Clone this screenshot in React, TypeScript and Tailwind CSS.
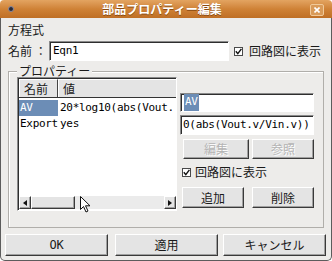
import React from "react";

const JP = "font-['Noto_Sans_CJK_JP',sans-serif]";
const MONO = "font-['DejaVu_Sans_Mono','Noto_Sans_CJK_JP',monospace] tracking-[-0.3px]";

const raised =
  "border border-t-white border-l-white border-r-[#3a3a3a] border-b-[#3a3a3a] shadow-[inset_-1px_-1px_0_#a0a0a0] bg-[#e4e4e4]";
const sunken =
  "border border-t-[#8a8a8a] border-l-[#8a8a8a] border-r-white border-b-white shadow-[inset_1px_1px_0_#2e2e2e]";

function Button({ label, w, disabled, mono }: { label: string; w: string; disabled?: boolean; mono?: boolean }) {
  return (
    <div className={`${w} h-full flex items-center justify-center text-[12px] ${raised} ${mono ? MONO : JP} ${
      disabled ? "text-[#b4b4b4] [text-shadow:1px_1px_0_#fff]" : "text-[#1a1a1a]"
    }`}>
      {label}
    </div>
  );
}

function Check() {
  return (
    <div className="w-[9px] h-[9px] border border-[#4a4a4a] bg-white flex items-center justify-center">
      <svg width="7" height="7" viewBox="0 0 7 7">
        <path d="M0.8 3.2 L2.8 5.6 L6.4 0.8" stroke="#111" strokeWidth="1.4" fill="none" />
      </svg>
    </div>
  );
}

export default function App() {
  return (
    <div className="w-[332px] h-[261px] flex flex-col bg-white">
      {/* title bar */}
      <div className="h-[18px] flex items-center rounded-t-[4px] bg-gradient-to-b from-[#e3a461] via-[#cf8236] to-[#bf6f25] px-[8px]">
        <div className="w-[6px] h-[6px] rounded-full bg-[#2a2a35] border border-[#8a8aa0]" />
        <div className={`flex-1 text-center text-white font-bold text-[12px] leading-none ${JP} [text-shadow:0_1px_0_#8a4a10]`}>
          部品プロパティー編集
        </div>
        <div className="w-[14px] h-[12px] mt-[1px] rounded-[2px] border border-[#f0c999] bg-[#d99a58] flex items-center justify-center">
          <svg width="6" height="6" viewBox="0 0 6 6">
            <path d="M0.5 0.5 L5.5 5.5 M5.5 0.5 L0.5 5.5" stroke="#fff" strokeWidth="1.6" />
          </svg>
        </div>
      </div>

      {/* body */}
      <div className="flex-1 flex flex-col bg-[#edecea] border-x border-b border-[#5c5c5c] rounded-b-[5px] relative">
        <div className={`mt-[4px] ml-[7px] h-[16px] flex items-center text-[12px] text-[#1a1a1a] ${JP}`}>方程式</div>

        <div className="mt-[3px] h-[20px] flex items-center">
          <div className={`ml-[7px] w-[41px] text-[12px] text-[#1a1a1a] ${JP}`}>名前 ：</div>
          <div className={`w-[180px] h-full bg-white flex items-center pl-[3px] text-[11px] text-black ${sunken} ${MONO}`}>Eqn1</div>
          <div className="ml-[5px]"><Check /></div>
          <div className={`ml-[6px] text-[12px] text-[#1a1a1a] ${JP}`}>回路図に表示</div>
        </div>

        {/* group box */}
        <div className="mt-[10px] ml-[7px] w-[316px] h-[157px] border border-[#b0aeaa] shadow-[inset_1px_1px_0_#fff] flex flex-col">
          <div className={`-mt-[9px] ml-[8px] px-[2px] self-start bg-[#edecea] text-[12px] leading-[16px] text-[#1a1a1a] ${JP}`}>
            プロパティー
          </div>
          <div className="mt-[-2px] ml-[8px] flex">
            {/* table */}
            <div className={`w-[160px] h-[134px] bg-white flex flex-col ${sunken}`}>
              <div className={`h-[19px] mt-[1px] ml-[1px] flex text-[12px] text-[#1a1a1a] border-b border-[#333] ${JP}`}>
                <div className="w-[39px] flex items-center pl-[4px] bg-[#e4e4e4] border-t border-l border-white border-r border-r-[#444]">名前</div>
                <div className="flex-1 flex items-center pl-[4px] bg-[#e4e4e4] border-t border-l border-white">値</div>
              </div>
              <div className={`mt-[2px] ml-[1px] h-[16px] flex items-center text-[11px] ${MONO}`}>
                <div className="w-[39px] h-full bg-[#6c8db6] text-white pl-[1px] flex items-center">AV</div>
                <div className="pl-[2px] text-black whitespace-nowrap overflow-hidden">20*log10(abs(Vout.</div>
              </div>
              <div className={`ml-[1px] h-[16px] flex items-center text-[11px] text-black ${MONO}`}>
                <div className="w-[39px] pl-[1px]">Export</div>
                <div className="pl-[2px]">yes</div>
              </div>
              <div className="flex-1" />
              {/* scrollbar */}
              <div className="h-[13px] ml-[1px] mb-[1px] flex bg-[#ebebeb]">
                <div className={`w-[12px] h-full flex items-center justify-center ${raised}`}>
                  <svg width="4" height="6" viewBox="0 0 4 6"><path d="M4 0 L0 3 L4 6 Z" fill="#111" /></svg>
                </div>
                <div className={`w-[44px] h-full ${raised}`} />
                <div className="flex-1" />
                <div className={`w-[12px] h-full flex items-center justify-center ${raised}`}>
                  <svg width="4" height="6" viewBox="0 0 4 6"><path d="M0 0 L4 3 L0 6 Z" fill="#111" /></svg>
                </div>
              </div>
            </div>

            {/* right column */}
            <div className="ml-[3px] w-[134px] flex flex-col">
              <div className={`mt-[16px] h-[19px] bg-white flex items-center pl-[3px] text-[11px] ${sunken} ${MONO}`}>
                <span className="bg-[#6c8db6] text-white px-[1px]">AV</span>
              </div>
              <div className={`mt-[3px] h-[20px] bg-white flex items-center pl-[2px] text-[11px] text-black whitespace-nowrap overflow-hidden ${sunken} ${MONO}`}>
                0(abs(Vout.v/Vin.v))
              </div>
              <div className="mt-[4px] h-[20px] flex pl-[3px]">
                <Button label="編集" w="w-[66px]" disabled />
                <div className="ml-[3px]"><Button label="参照" w="w-[62px]" disabled /></div>
              </div>
              <div className="mt-[6px] h-[14px] flex items-center pl-[2px]">
                <Check />
                <div className={`ml-[4px] text-[12px] text-[#1a1a1a] ${JP}`}>回路図に表示</div>
              </div>
              <div className="mt-[8px] h-[21px] flex pl-[2px]">
                <Button label="追加" w="w-[62px]" />
                <div className="ml-[8px] h-full"><Button label="削除" w="w-[62px]" /></div>
              </div>
            </div>
          </div>
        </div>

        {/* bottom buttons */}
        <div className="mt-[6px] h-[22px] flex">
          <div className="ml-[4px] h-full"><Button label="OK" w="w-[103px]" mono /></div>
          <div className="ml-[7px] h-full"><Button label="適用" w="w-[103px]" /></div>
          <div className="ml-[5px] h-full"><Button label="キャンセル" w="w-[103px]" /></div>
        </div>

        {/* mouse pointer */}
        <svg className="absolute left-[79px] top-[178px]" width="11" height="17" viewBox="0 0 11 17">
          <path d="M0.5 0.5 L0.5 13.5 L3.5 10.5 L6 16 L8 15 L5.5 9.8 L10 9.8 Z" fill="#fff" stroke="#111" strokeWidth="1" />
        </svg>
      </div>
    </div>
  );
}
